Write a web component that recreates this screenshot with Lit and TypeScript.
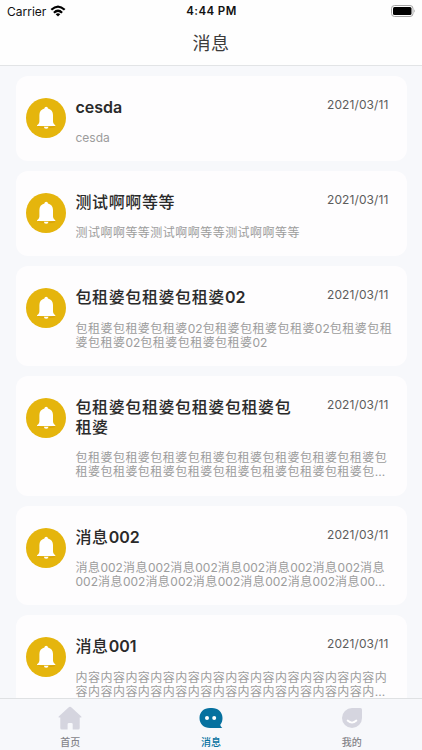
import { LitElement, html, svg, css } from "lit";
import { customElement, property } from "lit/decorators.js";

interface Message {
  title: string[];
  body: string[];
  date: string;
}

const messages: Message[] = [
  { title: ["cesda"], body: ["cesda"], date: "2021/03/11" },
  { title: ["测试啊啊等等"], body: ["测试啊啊等等测试啊啊等等测试啊啊等等"], date: "2021/03/11" },
  {
    title: ["包租婆包租婆包租婆02"],
    body: ["包租婆包租婆包租婆02包租婆包租婆包租婆02包租婆包租", "婆包租婆02包租婆包租婆包租婆02"],
    date: "2021/03/11",
  },
  {
    title: ["包租婆包租婆包租婆包租婆包", "租婆"],
    body: ["包租婆".repeat(8) + "包", "租婆" + "包租婆".repeat(7) + "包..."],
    date: "2021/03/11",
  },
  {
    title: ["消息002"],
    body: ["消息002".repeat(6) + "消息", "002" + "消息002".repeat(5) + "消息00..."],
    date: "2021/03/11",
  },
  {
    title: ["消息001"],
    body: ["内容".repeat(12) + "内", "容" + "内容".repeat(11) + "内..."],
    date: "2021/03/11",
  },
];

// Latin runs are set tight and slightly heavier than the Chinese around them.
const setLine = (line: string) => {
  const runs = line.match(/[\x20-\x7e]+|[^\x20-\x7e]+/g) ?? [];
  return html`<div>${runs.map((r) => (/^[\x20-\x7e]/.test(r) ? html`<span class="latin">${r}</span>` : r))}</div>`;
};

@customElement("message-card")
class MessageCard extends LitElement {
  @property({ attribute: false }) message!: Message;

  static styles = css`
    :host {
      display: flex;
      align-items: flex-start;
      box-sizing: border-box;
      flex: none;
      padding: 22px 10px 15.8px 10.5px;
      border-radius: 12px;
      background: #fefdfe;
    }
    .bell {
      flex: none;
      width: 40px;
      height: 40px;
      margin-right: 9.5px;
    }
    .content {
      flex: 1;
      min-width: 0;
    }
    .head {
      display: flex;
      justify-content: space-between;
      align-items: flex-start;
    }
    .title {
      font-size: 16px;
      font-weight: 500;
      line-height: 19.3px;
      letter-spacing: 0.6px;
      color: #2a2a2a;
      white-space: nowrap;
    }
    .title .latin {
      font-weight: 600;
      letter-spacing: 0;
    }
    .date {
      margin: -1px 8px 0 0;
      font-size: 12px;
      line-height: 16px;
      letter-spacing: 0.1px;
      color: #5c5c5c;
      white-space: nowrap;
    }
    .body {
      margin-top: 13.8px;
      font-size: 12px;
      line-height: 14.5px;
      letter-spacing: 0.47px;
      color: #9c9c9c;
      white-space: nowrap;
    }
    .body .latin {
      letter-spacing: 0;
    }
  `;

  render() {
    const { title, body, date } = this.message;
    return html`
      <svg class="bell" viewBox="0 0 40 40">
        <circle cx="20" cy="20" r="20" fill="#e5b50d" />
        <path d="M12 28q4 2.500 17 0v1.200q-9 2-17-.5z" fill="#c98c09" opacity=".45" />
        <path
          d="M20.200 8.700a1.800 1.800 0 0 0-1.800 1.700c-3.300.8-5 3.300-5 6.600v6.200c0 1.600-.6 2.600-2.100 3.700-.5.4-.3 1.100.3 1.100h17.200c.6 0 .8-.7.3-1.100-1.500-1.100-2.100-2.100-2.100-3.700V17c0-3.300-1.700-5.800-5-6.600a1.800 1.800 0 0 0-1.800-1.700z"
          fill="#fff"
        />
        <path d="M17.900 28.700h4.600a2.300 2.100 0 0 1-4.600 0z" fill="#fff" />
      </svg>
      <div class="content">
        <div class="head">
          <div class="title">${title.map(setLine)}</div>
          <div class="date">${date}</div>
        </div>
        <div class="body">${body.map(setLine)}</div>
      </div>
    `;
  }
}

const homeIcon = svg`
  <path d="M13.500 1.400 23.300 10.600q.7.8-.3.9H21.700V22q0 1.600-1.600 1.600H14.700V18.200q0-1.300-1.300-1.300H10.900q-1.300 0-1.300 1.300V23.600H3.900Q2.300 23.600 2.300 22V11.500H1q-1-.1-.3-.9L10.500 1.400q1.500-1.200 3 0z" fill="#d5d5df" />`;
const chatIcon = svg`
  <path d="M11 2h2c6 0 10.500 4 10.500 10 0 2.700-.7 5-2.200 6.700.2 1.300.9 2.200 2 3.300H11C4.800 22 .5 18 .5 12S4.800 2 11 2z" fill="#06719f" />
  <circle cx="8" cy="12" r="2" fill="#fff" /><circle cx="15.200" cy="12" r="2" fill="#fff" />`;
const faceIcon = svg`
  <path d="M12 2H20.500Q22 2 22 3.500V12A10 10 0 1 1 12 2z" fill="#d5d5df" />
  <path d="M7.600 14.500q4.400 4.200 8.800 0" fill="none" stroke="#fff" stroke-width="1.800" stroke-linecap="round" />`;

const tabs = [
  { label: "首页", icon: homeIcon, active: false },
  { label: "消息", icon: chatIcon, active: true },
  { label: "我的", icon: faceIcon, active: false },
];

@customElement("app-root")
class AppRoot extends LitElement {
  static styles = css`
    :host {
      display: flex;
      flex-direction: column;
      height: 750px;
      overflow: hidden;
      background: #f7f8fb;
      font-family: Inter, "Noto Sans CJK SC", sans-serif;
    }
    .header {
      flex: none;
      box-sizing: border-box;
      height: 66px;
      background: #fefefe;
      border-bottom: 1px solid #e2e4e6;
    }
    .status {
      display: grid;
      grid-template-columns: 1fr auto 1fr;
      align-items: center;
      height: 22px;
      padding: 0 6px 0 7px;
      font-size: 12px;
      color: #111;
    }
    .carrier {
      display: flex;
      align-items: center;
      gap: 4px;
    }
    .wifi {
      width: 16px;
      height: 12px;
    }
    .time {
      font-size: 11.5px;
      font-weight: 600;
      letter-spacing: 0.4px;
    }
    .battery {
      justify-self: end;
      width: 25px;
      height: 12px;
    }
    .heading {
      height: 43px;
      line-height: 43px;
      text-align: center;
      font-size: 18px;
      letter-spacing: 0.4px;
      color: #3c3c3c;
    }
    .list {
      flex: 1;
      min-height: 0;
      overflow: hidden;
      display: flex;
      flex-direction: column;
      gap: 10px;
      padding: 9.7px 15.5px 0;
    }
    .tabs {
      flex: none;
      box-sizing: border-box;
      display: grid;
      grid-template-columns: repeat(3, 1fr);
      height: 52.5px;
      border-top: 1px solid #dfe1e3;
      background: #f7f8fb;
    }
    .tab {
      display: flex;
      flex-direction: column;
      align-items: center;
      padding-top: 7.5px;
      font-size: 10px;
      font-weight: 500;
      line-height: 14px;
      color: #85858a;
    }
    .tab.active {
      color: #06719f;
    }
    .glyph {
      width: 24px;
      height: 24px;
      margin-bottom: 4.5px;
    }
  `;

  render() {
    return html`
      <div class="header">
        <div class="status">
          <div class="carrier">
            Carrier
            <svg class="wifi" viewBox="0 0 16 12">
              <g fill="none" stroke="#000" stroke-width="2.200">
                <path d="M1.300 4.800q6.700-6.400 13.400 0" />
                <path d="M3.900 7.700q4.100-3.900 8.200 0" />
              </g>
              <path d="M5.700 9.200q2.300-1.900 4.600 0L8 11.600z" />
            </svg>
          </div>
          <div class="time">4:44 PM</div>
          <svg class="battery" viewBox="0 0 25 12">
            <rect x=".5" y=".5" width="21.500" height="11" rx="3" fill="none" stroke="#a5a5a5" />
            <rect x="2" y="2" width="18.500" height="8" rx="1.500" />
            <path d="M23.300 4.200q1.500 1.800 0 3.600z" fill="#999" />
          </svg>
        </div>
        <div class="heading">消息</div>
      </div>
      <div class="list">${messages.map((m) => html`<message-card .message=${m}></message-card>`)}</div>
      <div class="tabs">
        ${tabs.map(
          (t) => html`
            <div class="tab ${t.active ? "active" : ""}">
              <svg class="glyph" viewBox="0 0 24 24">${t.icon}</svg>
              <span>${t.label}</span>
            </div>
          `
        )}
      </div>
    `;
  }
}
